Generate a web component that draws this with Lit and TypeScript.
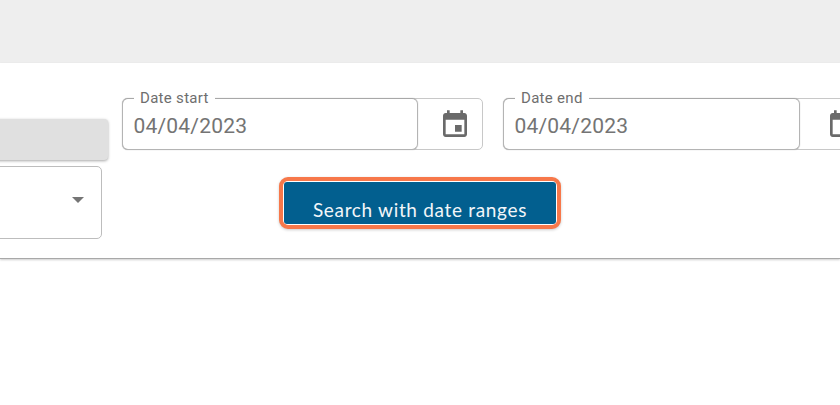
import { LitElement, html, css } from "lit";
import { customElement } from "lit/decorators.js";

const calendar = html`<svg class="cal" viewBox="0 0 24 24" width="32" height="32" aria-hidden="true"><path fill="#6a6a6a" d="M17 12h-5v5h5v-5zM16 1v2H8V1H6v2H5c-1.11 0-1.99.9-1.99 2L3 19c0 1.1.89 2 2 2h14c1.1 0 2-.9 2-2V5c0-1.1-.9-2-2-2h-1V1h-2zm3 18H5V8h14v11z"/></svg>`;

@customElement("app-root")
export class AppRoot extends LitElement {
  static styles = css`
    :host { display: block; width: 840px; height: 405px; overflow: hidden; background: #fff; font-family: Roboto, sans-serif; }
    .top { height: 63px; background: #eee; }
    .card { height: 196px; box-sizing: border-box; background: #fff; overflow: hidden; border-bottom: 1px solid #a8a8a8; box-shadow: 0 1px 2px rgba(0,0,0,.2); padding-top: 35px; display: flex; gap: 14px; }
    .left { flex: none; width: 128px; margin-left: -20px; padding-top: 21px; display: flex; flex-direction: column; gap: 6px; }
    .gray { height: 41px; background: #e0e0e0; border-radius: 4px; box-shadow: 0 1px 3px rgba(0,0,0,.35); }
    .select { width: 122px; height: 73px; box-sizing: border-box; border: 1px solid #bdbdbd; border-radius: 5px; display: flex; align-items: center; justify-content: flex-end; padding-right: 17px; padding-bottom: 6px; }
    .arrow { width: 0; height: 0; border-left: 6.5px solid transparent; border-right: 6.5px solid transparent; border-top: 6.5px solid #757575; }
    .main { flex: none; width: 740px; display: grid; grid-template-columns: 361px 361px; column-gap: 20px; align-content: start; }
    .date { height: 52px; box-sizing: border-box; border: 1px solid #c8c8c8; border-radius: 5px; display: flex; position: relative; }
    .input { width: 296px; flex: none; margin: -1px 0 -1px -1px; box-sizing: border-box; border: 1px solid #b4b4b4; border-top-color: #a8a8a8; border-radius: 6px; box-shadow: 0 0 1px #a8a8a8; padding: 14px 0 0 10.5px; font-size: 21px; line-height: 26px; letter-spacing: .2px; color: #747474; }
    .date.end .input { width: 297px; }
    .label { position: absolute; left: 11px; top: -9px; padding: 0 6px; background: #fff; font-size: 15px; line-height: 17px; letter-spacing: .3px; color: #6e6e6e; }
    .icon { flex: 1; display: flex; justify-content: center; align-items: center; padding: 1px 0 0 10px; }
    .date.end .icon { flex: none; width: 64px; }
    .cal { display: block; }
    .btn-wrap { grid-column: 1 / 3; margin: 27px 0 0 157px; }
    .btn { width: 282px; height: 52px; box-sizing: border-box; border: 4px solid #f7784a; border-radius: 9px; background: #fff; padding: 1px; box-shadow: 0 1px 3px rgba(0,0,0,.2); }
    .btn span { display: block; height: 100%; background: #025f8f; border-radius: 3px; box-sizing: border-box; color: #f2f6f9; text-align: center; font-family: Lato, sans-serif; font-size: 19px; line-height: 22px; padding-top: 17px; letter-spacing: .68px; overflow: hidden; }
  `;

  render() {
    return html`
      <div class="top"></div>
      <div class="card">
        <div class="left">
          <div class="gray"></div>
          <div class="select"><span class="arrow"></span></div>
        </div>
        <div class="main">
          <div class="date">
            <span class="label">Date start</span>
            <div class="input">04/04/2023</div>
            <div class="icon">${calendar}</div>
          </div>
          <div class="date end">
            <span class="label">Date end</span>
            <div class="input">04/04/2023</div>
            <div class="icon">${calendar}</div>
          </div>
          <div class="btn-wrap"><div class="btn"><span>Search with date ranges</span></div></div>
        </div>
      </div>
    `;
  }
}
